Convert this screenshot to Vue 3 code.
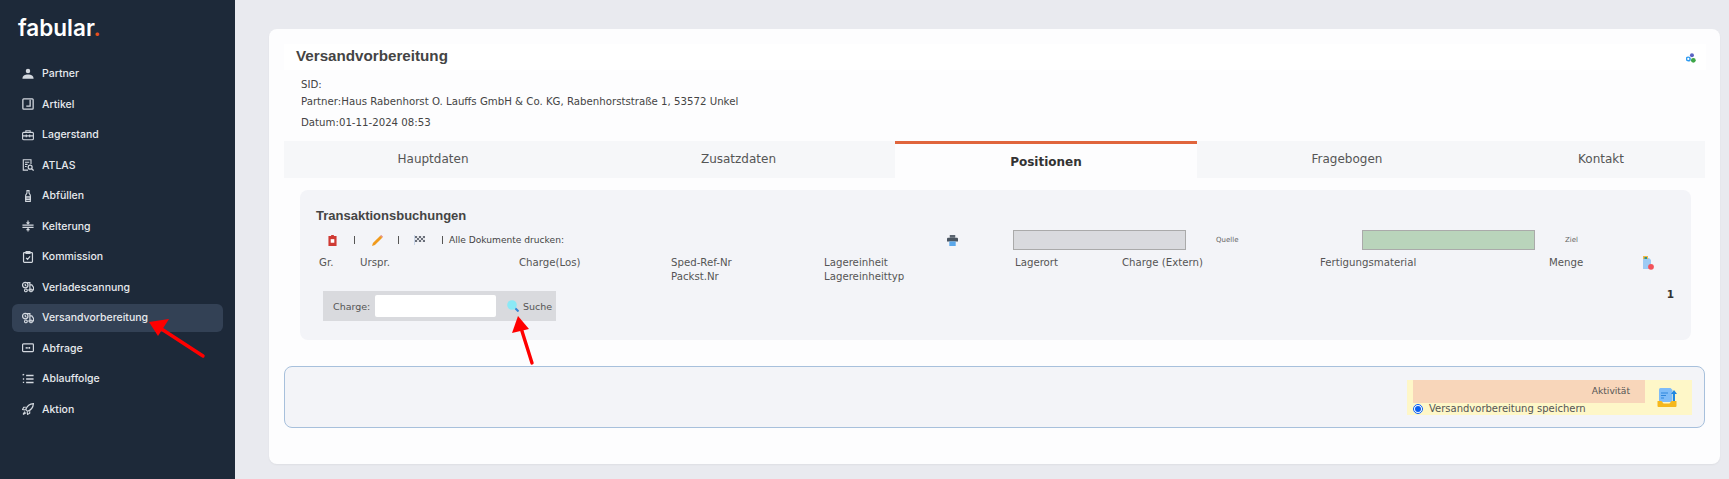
<script setup>
const menu = [
  { label: 'Partner', icon: 'user' },
  { label: 'Artikel', icon: 'box' },
  { label: 'Lagerstand', icon: 'stock' },
  { label: 'ATLAS', icon: 'atlas' },
  { label: 'Abfüllen', icon: 'bottle' },
  { label: 'Kelterung', icon: 'press' },
  { label: 'Kommission', icon: 'clip' },
  { label: 'Verladescannung', icon: 'truck' },
  { label: 'Versandvorbereitung', icon: 'truck', active: true },
  { label: 'Abfrage', icon: 'sql' },
  { label: 'Ablauffolge', icon: 'list' },
  { label: 'Aktion', icon: 'rocket' }
]
const tabs = [
  { label: 'Hauptdaten', w: 298 },
  { label: 'Zusatzdaten', w: 313 },
  { label: 'Positionen', w: 302, active: true },
  { label: 'Fragebogen', w: 300 },
  { label: 'Kontakt', w: 208 }
]
</script>

<template>
  <div class="page">
    <aside class="side">
      <div class="logo">fabular<span class="dot">.</span></div>
      <nav class="menu">
        <a v-for="m in menu" :key="m.label" class="item" :class="{ on: m.active }">
          <svg class="ic" viewBox="0 0 14 14" fill="none" stroke="currentColor" stroke-width="1.3">
            <template v-if="m.icon === 'user'">
              <circle cx="7" cy="3.4" r="2.6" fill="currentColor" stroke="none" />
              <path d="M.5 12.500c0-3.500 2.800-5 6.500-5s6.500 1.500 6.500 5z" fill="currentColor" stroke="none" />
            </template>
            <template v-else-if="m.icon === 'box'">
              <rect x="1" y="1" width="12" height="12" rx="1" stroke-width="1.500" />
              <path d="M5 9.500h4.500V2" stroke-width="1.500" />
            </template>
            <template v-else-if="m.icon === 'stock'">
              <rect x=".7" y="4" width="12.600" height="8.500" rx="1.200" />
              <path d="M4.500 4V2h5v2M.7 8h12.600M5 6.500v3M9 6.500v3" />
            </template>
            <template v-else-if="m.icon === 'atlas'">
              <path d="M7 13H1.500V.8h9v5" />
              <path d="M3.500 3.800h5M3.500 6.300h3M3.500 8.800h2" />
              <circle cx="9.500" cy="9.500" r="2.300" stroke-width="1.400" />
              <path d="M11.200 11.200l2.300 2.300" stroke-width="1.500" />
            </template>
            <template v-else-if="m.icon === 'bottle'">
              <path d="M5.800.7h2.400v3l1.500 2.300v7.300H4.300V6l1.500-2.300z" />
              <path d="M4.300 8h5.400v3H4.300z" fill="currentColor" fill-opacity=".35" />
            </template>
            <template v-else-if="m.icon === 'press'">
              <path d="M.5 6h13M.5 8.500h13" stroke-width="1.500" />
              <path d="M7 .5v4M5.300 2.800L7 4.500l1.700-1.700M7 13.500V10M5.300 11.700L7 10l1.700 1.700" />
            </template>
            <template v-else-if="m.icon === 'clip'">
              <rect x="1.800" y="1.800" width="10.400" height="11.500" rx="1" stroke-width="1.400" />
              <path d="M4.800.8h4.400v2H4.800zM4.800 8l1.700 1.700 2.900-3.400" stroke-width="1.400" />
            </template>
            <template v-else-if="m.icon === 'truck'">
              <circle cx="3.800" cy="4.800" r="3.200" stroke-width="1.400" />
              <path d="M3.800 3.200v1.800l1.200.8M6 1.800h3.200v8.700H6.200M9.200 4.500h2.300l2 3v3h-4.300" stroke-width="1.400" />
              <circle cx="4.500" cy="11" r="1.600" stroke-width="1.300" />
              <circle cx="10.500" cy="11" r="1.600" stroke-width="1.300" />
            </template>
            <template v-else-if="m.icon === 'sql'">
              <rect x=".7" y="2.300" width="12.600" height="9" rx="1" stroke-width="1.400" />
              <path d="M4.300 6.800h5.400" stroke-width="2" stroke-dasharray="1.400 .5" />
            </template>
            <template v-else-if="m.icon === 'list'">
              <path d="M4.800 3h8.700M4.800 7h8.700M4.800 11h8.700" stroke-width="1.700" />
              <path d="M.7 2.500l1.800-1M1 7h1.500M1 11h1.500" stroke-width="1.500" />
            </template>
            <template v-else>
              <path d="M13.300.7C9 1 5.800 3.600 4.300 7.500l2.200 2.200c3.900-1.500 6.500-4.700 6.800-9z" stroke-width="1.400" />
              <path d="M4.500 5H2L.7 7.500l3.300.5M9 9.500V12l-2.500 1.300-.5-3.300M3.300 10l-2 3.300 3.300-2" stroke-width="1.300" />
            </template>
          </svg>
          <span>{{ m.label }}</span>
        </a>
      </nav>
    </aside>

    <main class="main">
      <section class="card">
        <header class="head">
          <h1>Versandvorbereitung</h1>
          <svg class="share" viewBox="0 0 12 12">
            <circle cx="6.500" cy="2.500" r="2.200" fill="#5a63c4" />
            <circle cx="2.500" cy="6.500" r="2" fill="none" stroke="#2f9bf0" stroke-width="1.600" />
            <circle cx="8" cy="8" r="2.600" fill="#3fa648" />
          </svg>
        </header>

        <div class="meta">
          <p class="m1">SID:</p>
          <p class="m2">Partner:Haus Rabenhorst O. Lauffs GmbH &amp; Co. KG, Rabenhorststraße 1, 53572 Unkel</p>
          <p class="m3">Datum:01-11-2024 08:53</p>
        </div>

        <div class="tabs">
          <div v-for="t in tabs" :key="t.label" class="tab" :class="{ on: t.active }" :style="{ width: t.w + 'px' }">{{ t.label }}</div>
        </div>

        <div class="panel">
          <h2>Transaktionsbuchungen</h2>

          <div class="tools">
            <div class="tool-left">
              <svg class="t-del" viewBox="0 0 10 12">
                <path d="M3.500 0h3v1h3v11H.5V1h3z" fill="#cf3a34" />
                <rect x="3" y="4.500" width="4" height="4" fill="#fff" />
              </svg>
              <i class="sep s1"></i>
              <svg class="t-pen" viewBox="0 0 12 12">
                <path d="M0 12l1-3.200L9 .8l2.200 2.200L3.200 11z" fill="#f09a1c" />
                <path d="M9 .8l1-.8 2 2-.8 1z" fill="#e6867a" />
              </svg>
              <i class="sep s2"></i>
              <svg class="t-flag" viewBox="0 0 11 10" shape-rendering="crispEdges">
                <path d="M0 0h1v10H0z" fill="#c9d5e8" />
                <path d="M1 1h10v6H1z" fill="#e2e3e8" />
                <path d="M1 1h2v2H1zM5 1h2v2H5zM9 1h2v2H9zM3 3h2v2H3zM7 3h2v2H7zM1 5h2v2H1zM5 5h2v2H5zM9 5h2v2H9z" fill="#6a6f7a" />
              </svg>
              <i class="sep s3"></i>
              <span class="print-all">Alle Dokumente drucken:</span>
            </div>
            <svg class="t-print" viewBox="0 0 12 12">
              <path d="M3 0h6v3H3z" fill="#5a6470" />
              <path d="M1 3h10a1 1 0 0 1 1 1v3H0V4a1 1 0 0 1 1-1z" fill="#4a5561" />
              <path d="M2.500 7h7v5h-7z" fill="#5aa7ea" />
            </svg>
            <div class="bar grey"></div>
            <span class="bar-label quelle">Quelle</span>
            <div class="bar green"></div>
            <span class="bar-label ziel">Ziel</span>
          </div>

          <div class="cols">
            <span>Gr.</span>
            <span>Urspr.</span>
            <span>Charge(Los)</span>
            <span>Sped-Ref-Nr<br />Packst.Nr</span>
            <span>Lagereinheit<br />Lagereinheittyp</span>
            <span>Lagerort</span>
            <span>Charge (Extern)</span>
            <span>Fertigungsmaterial</span>
            <span>Menge</span>
            <svg class="t-clear" viewBox="0 0 12 14">
              <path d="M1 2h6l2 2v9H1z" fill="#9ccbf5" />
              <path d="M1 0h5v3H1z" fill="#eeb94a" />
              <path d="M2.500 1h2.500v2H2.500z" fill="#2f8f8a" />
              <circle cx="9" cy="10.800" r="2.900" fill="#f2525a" />
            </svg>
          </div>

          <div class="count">1</div>

          <div class="search">
            <label for="charge">Charge:</label>
            <input id="charge" type="text" />
            <svg class="lens" viewBox="0 0 12 12">
              <path d="M7.500 7.500l4 4" stroke="#3486d6" stroke-width="2" />
              <circle cx="5" cy="5" r="4.800" fill="#8be9f6" />
            </svg>
            <span>Suche</span>
          </div>
        </div>

        <div class="activity">
          <div class="yellow">
            <div class="yellow-main">
              <div class="orange">Aktivität</div>
              <label class="radio"><input type="radio" checked name="a" /> Versandvorbereitung speichern</label>
            </div>
            <svg class="save" viewBox="0 0 20 20">
              <path d="M2 1.500a1.500 1.500 0 0 1 1.500-1.500h10l2 2v12H2z" fill="#7fbcf8" />
              <path d="M4 5h7M4 7.500h5M4 10h3" stroke="#2f86dc" stroke-width="1" />
              <path d="M17 2l3 4h-2v8h-2V6h-2z" fill="#1f86e0" />
              <path d="M.5 13h4l2 2.500h6l2-2.500h5v5a1 1 0 0 1-1 1h-17a1 1 0 0 1-1-1z" fill="#f5b81e" />
            </svg>
          </div>
        </div>
      </section>
    </main>

    <svg class="arrows" viewBox="0 0 1729 479" fill="none">
      <path d="M203 356L160 328" stroke="#f00" stroke-width="3.400" stroke-linecap="round" />
      <path d="M149 322l20-3-11 17z" fill="#f00" />
      <path d="M532 363L521 328" stroke="#f00" stroke-width="3.400" stroke-linecap="round" />
      <path d="M518 316l11 13-17 4z" fill="#f00" />
    </svg>
  </div>
</template>

<style>
html, body { margin: 0; padding: 0; background: #e9eaef; }
</style>

<style scoped>
* { box-sizing: border-box; }
.page {
  display: flex;
  width: 1729px;
  height: 479px;
  overflow: hidden;
  position: relative;
  background: #e9eaef;
}
.side {
  width: 235px;
  flex: none;
  background: #1d2939;
  padding: 14px 12px 0;
  font-family: Inter, sans-serif;
}
.logo {
  height: 30px;
  padding-left: 6px;
  font-size: 22.500px;
  line-height: 28px;
  font-weight: 600;
  color: #fff;
}
.dot { color: #e8501c; }
.menu {
  display: flex;
  flex-direction: column;
  gap: 2.500px;
  margin-top: 15.500px;
}
.item {
  height: 28px;
  display: flex;
  align-items: center;
  gap: 8px;
  padding-left: 10px;
  font-size: 10.500px;
  font-weight: 500;
  color: #e7eaee;
  border-radius: 6px;
}
.item.on { background: #334155; }
.ic { width: 12px; height: 12px; flex: none; color: #d3d8df; }

.main { flex: 1; padding: 29px 9px 15px 34px; min-width: 0; }
.card {
  height: 435px;
  background: #fdfdfe;
  border-radius: 8px;
  padding: 15px 14px 0 15px;
  box-shadow: 0 1px 2px rgba(0, 0, 0, 0.05);
}
.head {
  height: 26px;
  background: #fff;
  display: flex;
  align-items: center;
  justify-content: space-between;
  padding: 0 9px 0 12px;
}
h1 {
  margin: 0 0 3px;
  font: bold 15.200px "Liberation Sans", sans-serif;
  color: #444;
}
.share { width: 11px; height: 11px; margin-top: 3px; }

.meta {
  font: 10.200px "DejaVu Sans", sans-serif;
  color: #444;
  padding-left: 17px;
}
.meta p { margin: 0; line-height: 13px; }
.m1 { padding-top: 8px; }
.m2 { padding-top: 4px; }
.m3 { padding-top: 8px; }

.tabs { display: flex; margin-top: 12px; height: 37px; background: #f6f7f9; width: 1421px; }
.tab {
  text-align: center;
  font: 12px/37px "DejaVu Sans", sans-serif;
  color: #555;
}
.tab.on {
  background: #fdfdfe;
  border-top: 3px solid #e0653c;
  font-weight: bold;
  color: #333;
  line-height: 36px;
}

.panel {
  width: 1391px;
  height: 150px;
  margin: 12px 0 0 16px;
  background: #f3f4f8;
  border-radius: 8px;
  padding: 18px 16px 0;
  position: relative;
}
h2 {
  margin: 0;
  font: bold 13px/16px "Liberation Sans", sans-serif;
  color: #444;
}
.tools {
  display: grid;
  grid-template-columns: 631px 66px 173px 176px 173px auto;
  align-items: center;
  height: 22px;
  margin-top: 5px;
  font: 9.100px "DejaVu Sans", sans-serif;
  color: #444;
}
.tool-left { display: flex; align-items: center; padding-left: 12px; }
.t-del { width: 9px; height: 11px; }
.sep { display: block; width: 1px; height: 8px; background: #555; }
.s1 { margin-left: 17px; }
.t-pen { width: 11px; height: 11px; margin-left: 17px; }
.s2 { margin-left: 15px; }
.t-flag { width: 11px; height: 10px; margin-left: 15px; }
.s3 { margin-left: 17px; }
.print-all { margin-left: 6px; }
.t-print { width: 11px; height: 11px; }
.bar { height: 20px; border: 1px solid #aaa; }
.bar.grey { background: #d9dade; }
.bar.green { background: #b9d4bb; }
.bar-label { font-size: 7px; color: #666; padding-left: 30px; }

.cols {
  display: grid;
  grid-template-columns: 41px 159px 152px 153px 191px 107px 198px 229px 93px 12px;
  margin: 5px 0 0 3px;
  font: 10.200px/14px "DejaVu Sans", sans-serif;
  color: #555;
  white-space: nowrap;
}
.t-clear { width: 12px; height: 14px; }
.count {
  position: absolute;
  right: 17px;
  top: 98px;
  font: bold 10.500px "DejaVu Sans", sans-serif;
  color: #333;
}
.search {
  width: 233px;
  height: 30px;
  margin: 7px 0 0 7px;
  background: #d9dade;
  display: flex;
  align-items: center;
  padding-left: 10px;
  font: 9.500px "DejaVu Sans", sans-serif;
  color: #555;
}
.search label { width: 42px; }
.search input {
  width: 121px;
  height: 22px;
  margin: 0;
  padding: 0;
  background: #fff;
  border: 0;
  border-radius: 2px;
}
.lens { width: 12px; height: 12px; margin-left: 11px; }
.search span { margin-left: 4px; }

.activity {
  width: 1421px;
  height: 62px;
  margin-top: 26px;
  background: #f3f4f8;
  border: 1.500px solid #a7c0dc;
  border-radius: 8px;
  display: flex;
  justify-content: flex-end;
  padding: 12.500px 12px 0 0;
}
.yellow {
  width: 285px;
  height: 35px;
  background: #fef7c8;
  display: flex;
}
.yellow-main { width: 238px; padding-left: 6px; }
.orange {
  height: 23px;
  background: #f8d6ba;
  text-align: right;
  padding-right: 15px;
  font: 9.100px/23px "DejaVu Sans", sans-serif;
  color: #555;
}
.radio {
  display: flex;
  align-items: center;
  gap: 6px;
  height: 12px;
  font: 10px "DejaVu Sans", sans-serif;
  color: #555;
}
.radio input { width: 10px; height: 10px; margin: 0; accent-color: #0a5ff0; }
.save { width: 20px; height: 20px; margin: 8px 0 0 12px; }

.arrows {
  position: absolute;
  left: 0;
  top: 0;
  width: 1729px;
  height: 479px;
  pointer-events: none;
}
</style>
